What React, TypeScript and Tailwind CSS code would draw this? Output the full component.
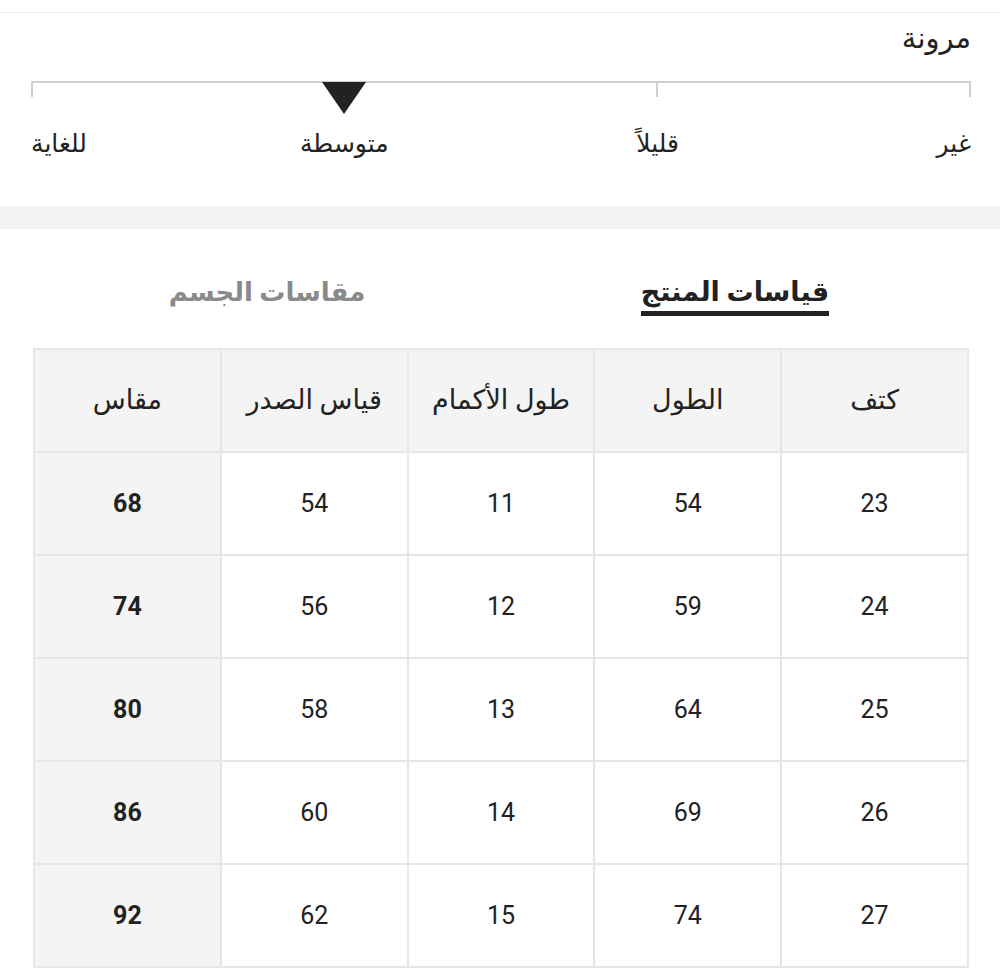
import React from "react";

const rows = [
  ["23", "54", "11", "54", "68"],
  ["24", "59", "12", "56", "74"],
  ["25", "64", "13", "58", "80"],
  ["26", "69", "14", "60", "86"],
  ["27", "74", "15", "62", "92"],
];
const headers = ["كتف", "الطول", "طول الأكمام", "قياس الصدر", "مقاس"];

export default function App() {
  return (
    <div
      dir="rtl"
      className="w-[1000px] min-h-[976px] bg-white text-[#222]"
      style={{ fontFamily: "Roboto, 'DejaVu Sans', 'Noto Sans', sans-serif" }}
    >
      <div className="h-[13px] border-b border-[#f0f0f0]" />
      <div className="pr-[29px] pl-[31px] pt-[6px] h-[193px]">
        <div className="text-[29px] font-medium leading-[38px]">مرونة</div>
        <div dir="ltr" className="relative mt-[24px] h-[16px] border-t-2 border-[#cfcfcf]">
          <div className="flex h-full">
            <div className="w-[2px] h-full bg-[#cfcfcf]" />
            <div className="flex-1" />
            <div className="flex-1" />
            <div className="w-[2px] h-full bg-[#cfcfcf]" />
            <div className="flex-1" />
            <div className="w-[2px] h-full bg-[#cfcfcf]" />
          </div>
          <svg
            className="absolute top-[-1px] left-[calc(33.333%-22px)]"
            width="44"
            height="32"
            viewBox="0 0 44 32"
          >
            <polygon points="0,0 44,0 22,32" fill="#222" />
          </svg>
        </div>
        <div dir="ltr" className="flex mt-[32px] text-[25px] leading-[30px] whitespace-nowrap">
          <div className="w-0 flex justify-start"><span dir="rtl">للغاية</span></div>
          <div className="flex-1" />
          <div className="w-0 flex justify-center"><span dir="rtl">متوسطة</span></div>
          <div className="flex-1" />
          <div className="w-0 flex justify-center"><span dir="rtl">قليلاً</span></div>
          <div className="flex-1" />
          <div className="w-0 flex justify-end"><span dir="rtl">غير</span></div>
        </div>
      </div>
      <div className="h-[23px] bg-[#f3f3f3]" />
      <div className="pr-[31px] pl-[33px]">
        <div className="flex h-[119px] pt-[44px]">
          <div className="flex-1 flex justify-center">
            <div className="text-[27px] font-bold leading-[38px] border-b-[5px] border-[#222] h-[43px]">
              قياسات المنتج
            </div>
          </div>
          <div className="flex-1 flex justify-center">
            <div className="text-[26px] font-bold leading-[38px] text-[#8a8a8a]">مقاسات الجسم</div>
          </div>
        </div>
        <table className="w-full table-fixed border-collapse text-center">
          <thead>
            <tr className="h-[103px] bg-[#f4f4f4]">
              {headers.map((h) => (
                <th key={h} className="border-2 border-[#e6e6e6] text-[27px] font-normal">
                  {h}
                </th>
              ))}
            </tr>
          </thead>
          <tbody>
            {rows.map((r, i) => (
              <tr key={i} className="h-[103px]">
                {r.map((c, j) => (
                  <td
                    key={j}
                    className={
                      j === 4
                        ? "border-2 border-[#e6e6e6] bg-[#f4f4f4] text-[25px] font-bold"
                        : "border-2 border-[#e6e6e6] text-[25px]"
                    }
                  >
                    {c}
                  </td>
                ))}
              </tr>
            ))}
          </tbody>
        </table>
      </div>
    </div>
  );
}
